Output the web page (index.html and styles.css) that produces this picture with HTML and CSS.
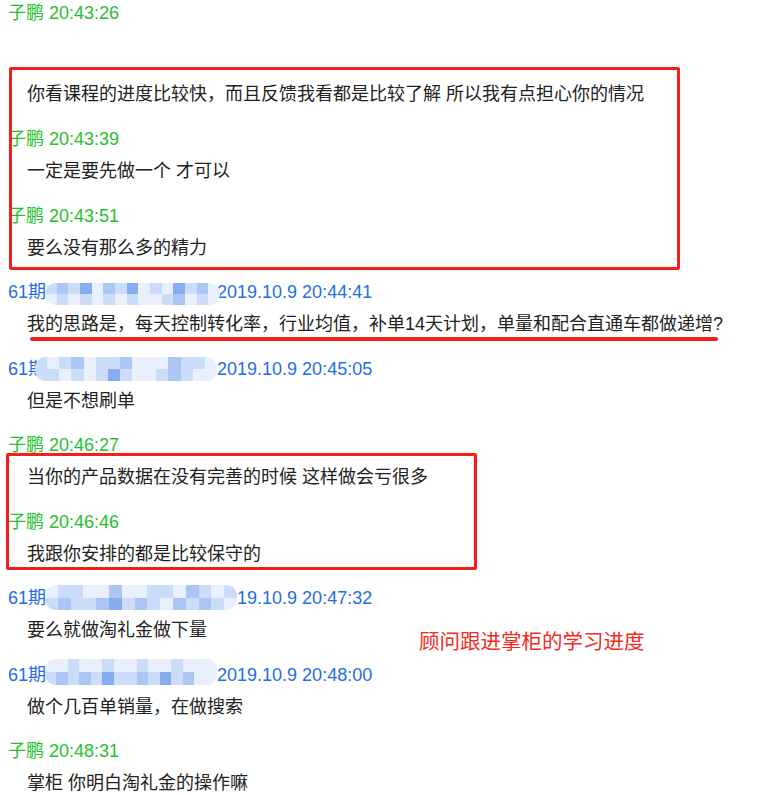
FILE: index.html
```html
<!DOCTYPE html>
<html lang="zh-CN">
<head>
<meta charset="utf-8">
<title>聊天记录</title>
<link rel="stylesheet" href="styles.css">
</head>
<body>
<div class="canvas">
  <div class="chat">
    <div class="msg msg-first"><div class="name me">子鹏 20:43:26</div></div>
    <div class="msg msg-solo"><div class="text text-solo">你看课程的进度比较快，而且反馈我看都是比较了解 所以我有点担心你的情况</div></div>
    <div class="msg"><div class="name me">子鹏 20:43:39</div><div class="text">一定是要先做一个 才可以</div></div>
    <div class="msg"><div class="name me">子鹏 20:43:51</div><div class="text">要么没有那么多的精力</div></div>
    <div class="msg">
      <div class="name other">61期<span class="hidden-name"></span>2019.10.9 20:44:41
        <div class="mosaic mosaic-a">
          <i class="s2"></i><i class="s3"></i><i class="s2"></i><i class="s4"></i><i class="s1"></i><i class="s3"></i><i class="s2"></i><i class="s4"></i><i class="s1"></i><i class="s2"></i><i class="s1"></i><i class="s4"></i><i class="s2"></i><i class="s3"></i><i class="s1"></i>
          <i class="s1"></i><i class="s2"></i><i class="s1"></i><i class="s2"></i><i class="s1"></i><i class="s2"></i><i class="s1"></i><i class="s2"></i><i class="s1"></i><i class="s1"></i><i class="s2"></i><i class="s3"></i><i class="s1"></i><i class="s2"></i><i class="s1"></i>
        </div>
      </div>
      <div class="text">我的思路是，每天控制转化率，行业均值，补单14天计划，单量和配合直通车都做递增?</div>
    </div>
    <div class="msg">
      <div class="name other">61期<span class="hidden-name"></span>2019.10.9 20:45:05
        <div class="mosaic mosaic-b">
          <i class="s2"></i><i class="s1"></i><i class="s2"></i><i class="s3"></i><i class="s1"></i><i class="s2"></i><i class="s2"></i><i class="s3"></i><i class="s1"></i><i class="s1"></i><i class="s1"></i><i class="s3"></i><i class="s2"></i><i class="s2"></i><i class="s1"></i>
          <i class="s2"></i><i class="s2"></i><i class="s1"></i><i class="s2"></i><i class="s1"></i><i class="s2"></i><i class="s4"></i><i class="s2"></i><i class="s1"></i><i class="s1"></i><i class="s2"></i><i class="s3"></i><i class="s2"></i><i class="s1"></i><i class="s1"></i>
        </div>
      </div>
      <div class="text">但是不想刷单</div>
    </div>
    <div class="msg"><div class="name me">子鹏 20:46:27</div><div class="text">当你的产品数据在没有完善的时候 这样做会亏很多</div></div>
    <div class="msg"><div class="name me">子鹏 20:46:46</div><div class="text">我跟你安排的都是比较保守的</div></div>
    <div class="msg">
      <div class="name other">61期<span class="hidden-name"></span>2019.10.9 20:47:32
        <div class="mosaic mosaic-c">
          <i class="s1"></i><i class="s2"></i><i class="s2"></i><i class="s1"></i><i class="s1"></i><i class="s3"></i><i class="s1"></i><i class="s1"></i><i class="s2"></i><i class="s2"></i><i class="s1"></i><i class="s3"></i><i class="s2"></i><i class="s1"></i><i class="s2"></i>
          <i class="s2"></i><i class="s3"></i><i class="s2"></i><i class="s2"></i><i class="s3"></i><i class="s4"></i><i class="s2"></i><i class="s3"></i><i class="s2"></i><i class="s1"></i><i class="s3"></i><i class="s2"></i><i class="s3"></i><i class="s2"></i><i class="s1"></i>
        </div>
      </div>
      <div class="text">要么就做淘礼金做下量</div>
    </div>
    <div class="msg">
      <div class="name other">61期<span class="hidden-name"></span>2019.10.9 20:48:00
        <div class="mosaic mosaic-d">
          <i class="s1"></i><i class="s1"></i><i class="s2"></i><i class="s1"></i><i class="s1"></i><i class="s2"></i><i class="s1"></i><i class="s1"></i><i class="s2"></i><i class="s1"></i><i class="s1"></i><i class="s2"></i><i class="s1"></i><i class="s1"></i><i class="s1"></i>
          <i class="s2"></i><i class="s3"></i><i class="s2"></i><i class="s3"></i><i class="s2"></i><i class="s4"></i><i class="s2"></i><i class="s2"></i><i class="s3"></i><i class="s2"></i><i class="s4"></i><i class="s2"></i><i class="s3"></i><i class="s1"></i><i class="s1"></i>
        </div>
      </div>
      <div class="text">做个几百单销量，在做搜索</div>
    </div>
    <div class="msg"><div class="name me">子鹏 20:48:31</div><div class="text">掌柜 你明白淘礼金的操作嘛</div></div>
  </div>

  <div class="mark-box mark-box-1"></div>
  <div class="mark-box mark-box-2"></div>
  <div class="mark-line"></div>
  <div class="mark-note">顾问跟进掌柜的学习进度</div>
</div>
</body>
</html>
```

FILE: styles.css
```css
html, body {
  margin: 0;
  padding: 0;
  background: #ffffff;
}

body {
  font-family: "Liberation Sans", "Noto Sans CJK SC", sans-serif;
  font-size: 18px;
  color: #222222;
}

.canvas {
  position: relative;
  width: 776px;
  height: 795px;
  overflow: hidden;
}

.chat {
  display: flex;
  flex-direction: column;
  padding: 1px 0 0 8px;
}

.msg {
  display: flex;
  flex-direction: column;
  margin-bottom: 20.5px;
}

.msg-first {
  margin-bottom: 57px;
}

.msg-solo {
  margin-bottom: 21px;
}

.name {
  position: relative;
  line-height: 24px;
  height: 24px;
  white-space: nowrap;
}

.name.me {
  color: #1fc22d;
}

.name.other {
  color: #1e6ee6;
}

.hidden-name {
  display: inline-block;
  width: 171px;
}

.text {
  margin-top: 8px;
  padding-left: 19px;
  line-height: 24px;
  height: 24px;
  white-space: nowrap;
  color: #222222;
}

.text-solo {
  margin-top: 0;
}

/* pixelated privacy mosaic over the sender name */
.mosaic {
  position: absolute;
  display: grid;
  grid-template-columns: repeat(15, 1fr);
  grid-template-rows: 1fr 1fr;
  border-radius: 11px;
  overflow: hidden;
  filter: blur(0.7px);
}

.mosaic i {
  display: block;
}

.mosaic .s1 { background: #e8f0fd; }
.mosaic .s2 { background: #cbdcf8; }
.mosaic .s3 { background: #abc6f5; }
.mosaic .s4 { background: #86adef; }

.mosaic-a { left: 37px; top: 3px; width: 175px; height: 22px; }
.mosaic-b { left: 27px; top: 0; width: 182px; height: 24px; }
.mosaic-c { left: 37px; top: -1px; width: 192px; height: 25px; }
.mosaic-d { left: 37px; top: -4px; width: 172px; height: 26px; }

/* red annotations drawn over the screenshot */
.mark-box {
  position: absolute;
  border: 3px solid #f51e19;
  border-radius: 2px;
  box-sizing: border-box;
}

.mark-box-1 {
  left: 9px;
  top: 67px;
  width: 671px;
  height: 203px;
}

.mark-box-2 {
  left: 6px;
  top: 453px;
  width: 471px;
  height: 117px;
}

.mark-line {
  position: absolute;
  left: 30px;
  top: 337px;
  width: 688px;
  height: 4px;
  border-radius: 2px;
  background: #f51e19;
}

.mark-note {
  position: absolute;
  left: 419px;
  top: 628px;
  font-family: "Noto Sans CJK SC", sans-serif;
  font-size: 20.5px;
  line-height: 24px;
  color: #f52a20;
  white-space: nowrap;
}
```
